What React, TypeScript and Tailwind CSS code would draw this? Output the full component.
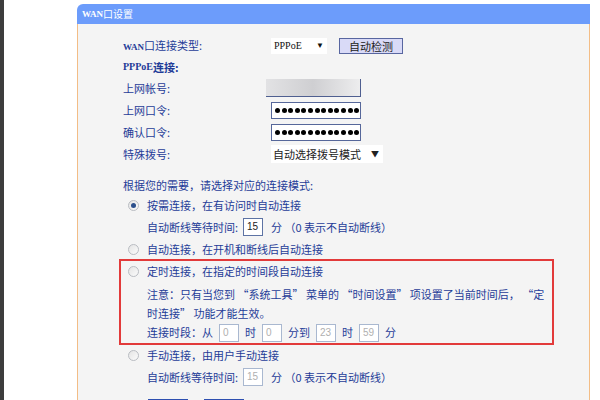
import React from 'react';

const cjk = { fontFamily: '"Noto Sans CJK SC", "Liberation Sans", sans-serif' };
const serif = { fontFamily: '"Liberation Serif", "Noto Sans CJK SC", serif' };

const Radio = ({ checked }: { checked?: boolean }) => (
    <span className="w-[11px] h-[11px] rounded-full border border-[#b9bcc2] bg-gradient-to-br from-[#e4e4e4] to-[#fbfbfb] flex items-center justify-center mr-[4px] shrink-0">
        {checked && <span className="w-[5px] h-[5px] rounded-full bg-[#2b4f8c]" />}
    </span>
);

const SmallBox = ({ value, dim }: { value: string; dim?: boolean }) => (
    <span
        className={`w-[20px] h-[18px] bg-white border flex items-center px-[3px] text-[10px] ${dim ? 'border-[#a9b8d0] text-[#b0b0b0]' : 'border-[#5d73a4] text-[#222]'}`}
        style={{ fontFamily: '"Liberation Sans", sans-serif' }}
    >
        {value}
    </span>
);

const Label = ({ children }: { children: React.ReactNode }) => (
    <span className="w-[148px] shrink-0">{children}</span>
);

const Dots = () => (
    <span className="w-[90px] h-[17px] bg-white border border-[#56679a] flex items-center pl-[3px] gap-[1.6px]">
        {Array.from({ length: 13 }).map((_, i) => (
            <span key={i} className="w-[5px] h-[5px] rounded-full bg-black" />
        ))}
    </span>
);

export default function App() {
    return (
        <div className="w-[600px] h-[400px] bg-white flex overflow-hidden text-[11px] text-[#1f3c98] leading-none" style={cjk}>
            <div className="w-[4px] bg-[#3d3d3d] shrink-0" />
            <div className="w-[73px] shrink-0" />
            <div className="w-[513px] shrink-0 mt-[4px] flex flex-col">
                {/* header */}
                <div className="h-[20px] shrink-0 bg-[#6c9cfb] rounded-tl-[6px] flex items-center pl-[5px] text-white text-[10px]">
                    <span style={serif} className="font-bold text-[9px]">WAN</span>
                    <span>口设置</span>
                </div>

                <div className="flex-1 shrink-0 bg-[#f4f4f4] border-x border-[#f3bd86] pl-[45px] pt-[11px]">
                    <div className="h-[22px] flex items-center">
                        <Label>
                            <span style={serif} className="font-bold text-[9px]">WAN</span>口连接类型:
                        </Label>
                        <span className="w-[56px] h-[16px] bg-white flex items-center justify-between px-[3px] text-[10px] text-[#111]" style={serif}>
                            PPPoE <span className="text-[8px]">▼</span>
                        </span>
                        <span className="ml-[12px] w-[64px] h-[16px] bg-[#d9daf7] border border-[#5866a0] flex items-center justify-center text-[11px] text-[#222]">
                            自动检测
                        </span>
                    </div>

                    <div className="h-[20px] flex items-center font-bold">
                        <span style={serif} className="text-[10px]">PPPoE</span>连接:
                    </div>

                    <div className="h-[22px] flex items-center">
                        <span className="w-[143px] shrink-0">上网帐号:</span>
                        <span className="w-[95px] h-[18px] bg-gradient-to-r from-[#e2e2e4] via-[#cfcfd2] to-[#ededee] border-b border-r border-[#4f5f90]" />
                    </div>

                    <div className="h-[22px] flex items-center">
                        <Label>上网口令:</Label>
                        <Dots />
                    </div>

                    <div className="h-[22px] flex items-center">
                        <Label>确认口令:</Label>
                        <Dots />
                    </div>

                    <div className="h-[22px] flex items-center">
                        <Label>特殊拨号:</Label>
                        <span className="w-[112px] h-[18px] bg-white flex items-center justify-between px-[2px] text-[11px] text-[#222]">
                            自动选择拨号模式 <span className="text-[8px] pr-[2px]">▼</span>
                        </span>
                    </div>

                    <div className="h-[10px]" />
                    <div className="h-[20px] flex items-center">根据您的需要，请选择对应的连接模式:</div>

                    <div className="h-[20px] flex items-center pl-[5px]">
                        <Radio checked />
                        <span className="ml-[4px]">按需连接，在有访问时自动连接</span>
                    </div>

                    <div className="h-[24px] flex items-center pl-[24px] gap-[5px]">
                        <span>自动断线等待时间:</span>
                        <SmallBox value="15" />
                        <span className="ml-[3px]">分 （0 表示不自动断线）</span>
                    </div>

                    <div className="h-[20px] flex items-center pl-[5px]">
                        <Radio />
                        <span className="ml-[4px]">自动连接，在开机和断线后自动连接</span>
                    </div>

                    <div className="w-[435px] -ml-[4px] border-2 border-[#e23a3a] pl-[7px] pb-[1px]">
                        <div className="h-[20px] flex items-center">
                            <Radio />
                            <span className="ml-[4px]">定时连接，在指定的时间段自动连接</span>
                        </div>
                        <div className="pl-[19px] pt-[4px] leading-[19px]">
                            注意：只有当您到 “系统工具” 菜单的 “时间设置” 项设置了当前时间后， “定
                            <br />
                            时连接” 功能才能生效。
                        </div>
                        <div className="h-[19px] flex items-center pl-[19px] gap-[6px]">
                            <span>连接时段：从</span>
                            <SmallBox value="0" dim />
                            <span>时</span>
                            <SmallBox value="0" dim />
                            <span>分到</span>
                            <SmallBox value="23" dim />
                            <span>时</span>
                            <SmallBox value="59" dim />
                            <span>分</span>
                        </div>
                    </div>

                    <div className="h-[20px] flex items-center pl-[5px]">
                        <Radio />
                        <span className="ml-[4px]">手动连接，由用户手动连接</span>
                    </div>

                    <div className="h-[24px] flex items-center pl-[24px] gap-[5px]">
                        <span>自动断线等待时间:</span>
                        <SmallBox value="15" dim />
                        <span className="ml-[3px]">分 （0 表示不自动断线）</span>
                    </div>

                    <div className="pt-[10px] pl-[25px] flex gap-[16px]">
                        <span className="w-[40px] h-[20px] border border-[#2d4fb0] bg-[#e8ecf8]" />
                        <span className="w-[40px] h-[20px] border border-[#2d4fb0] bg-[#e8ecf8]" />
                    </div>
                </div>
            </div>
        </div>
    );
}
